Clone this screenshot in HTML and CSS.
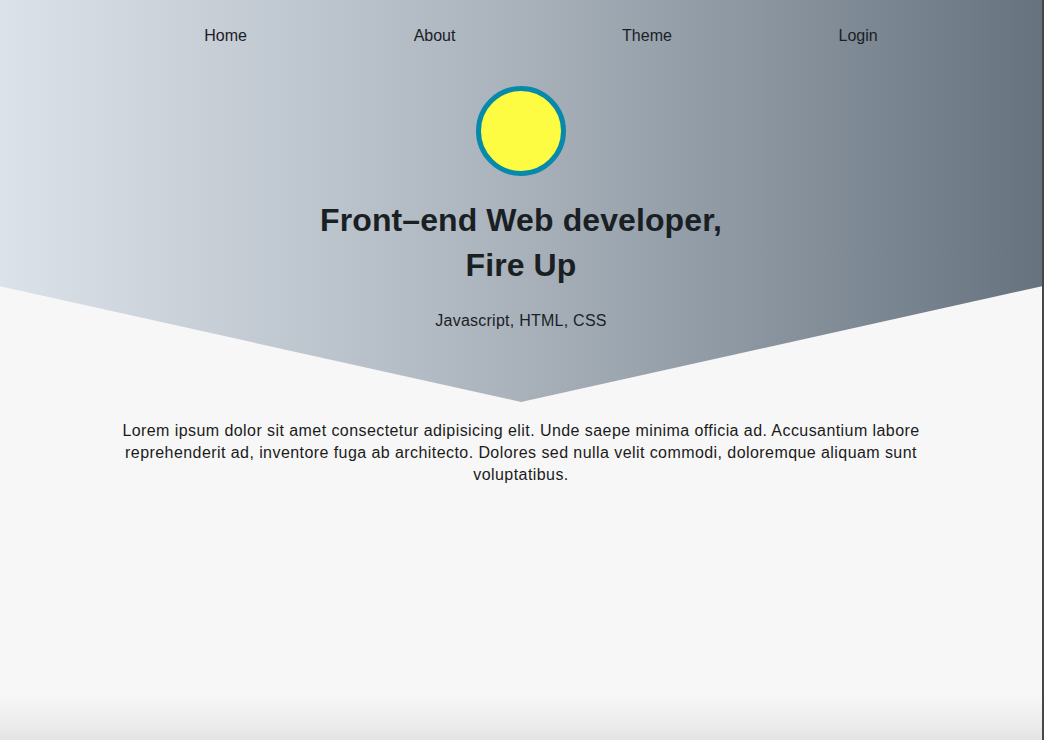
FILE: index.html
```html
<!DOCTYPE html>
<html lang="en">
<head>
<meta charset="utf-8">
<title>Fire Up</title>
<link rel="stylesheet" href="styles.css">
</head>
<body>
<div class="page">
  <header class="hero">
    <nav class="nav">
      <ul class="nav-list">
        <li><a href="#">Home</a></li>
        <li><a href="#">About</a></li>
        <li><a href="#">Theme</a></li>
        <li><a href="#">Login</a></li>
      </ul>
    </nav>
    <div class="avatar"></div>
    <h1 class="title">Front–end Web developer,<br>Fire Up</h1>
    <p class="subtitle">Javascript, HTML, CSS</p>
  </header>
  <main class="content">
    <p class="intro">Lorem ipsum dolor sit amet consectetur adipisicing elit. Unde saepe minima officia ad. Accusantium labore reprehenderit ad, inventore fuga ab architecto. Dolores sed nulla velit commodi, doloremque aliquam sunt voluptatibus.</p>
  </main>
</div>
</body>
</html>
```

FILE: styles.css
```css
html {
  margin: 0;
  background: #474747;
}
body {
  margin: 0;
  width: 1042px;
  min-height: 740px;
  background: linear-gradient(to bottom, #f7f7f7 0, #f7f7f7 695px, #ececec 725px, #e3e3e3 740px);
  font-family: "Liberation Sans", Arial, sans-serif;
  color: #1b2026;
}
.page {
  min-height: 740px;
  box-sizing: border-box;
}
.hero {
  height: 402px;
  box-sizing: border-box;
  padding-top: 26px;
  background: linear-gradient(to right, #dce2ea 0%, #a9b2bb 50%, #66737f 100%);
  clip-path: polygon(0 0, 100% 0, 100% 71.2%, 50% 100%, 0 71.2%);
  text-align: center;
}
.nav {
  width: 880px;
  margin: 0 auto;
}
.nav-list {
  list-style: none;
  margin: 0;
  padding: 0 0 0 40px;
  display: flex;
  justify-content: space-around;
  line-height: 20px;
  font-size: 16px;
}
.nav-list a {
  color: #1b2026;
  text-decoration: none;
}
.avatar {
  width: 90px;
  height: 90px;
  box-sizing: border-box;
  margin: 40px auto 0;
  border-radius: 50%;
  border: 5px solid #0689ab;
  background: #fefb43;
}
.title {
  margin: 22px 0 0;
  font-size: 32px;
  line-height: 45px;
  font-weight: bold;
  color: #1a1f24;
  letter-spacing: 0.1px;
}
.subtitle {
  margin: 23px 0 0;
  font-size: 16px;
  line-height: 20px;
  letter-spacing: 0.25px;
}
.content {
  width: 834px;
  margin: 0 auto;
  padding-top: 18px;
}
.intro {
  margin: 0;
  text-align: center;
  font-size: 16px;
  line-height: 22px;
  letter-spacing: 0.43px;
  color: #1b1b1b;
}
```
